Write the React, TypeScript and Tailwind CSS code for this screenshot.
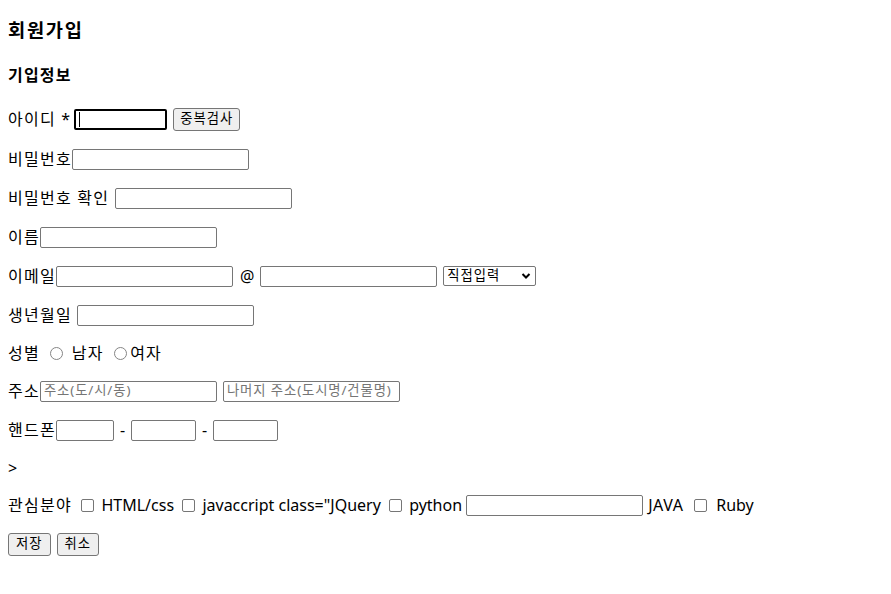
import React from "react";

const Input = ({ w, placeholder, focused }: { w: number; placeholder?: string; focused?: boolean }) => (
  <div
    className={
      "h-[21px] rounded-[2px] bg-white flex items-center px-[2px] box-border shrink-0 " +
      (focused ? "border-2 border-black" : "border border-[#767676]")
    }
    style={{ width: w }}
  >
    {focused && <div className="w-[1px] h-[15px] bg-black ml-[1px]" />}
    {placeholder && (
      <span className="text-[13.33px] text-[#757575] whitespace-pre leading-none pl-[1px] tracking-[0.9px]">
        {placeholder}
      </span>
    )}
  </div>
);

const Btn = ({ children, wide }: { children: React.ReactNode; wide?: boolean }) => (
  <div
    className={
      "h-[23px] bg-[#efefef] border border-[#767676] rounded-[3px] text-[13.33px] tracking-[1px] flex items-center leading-none text-black shrink-0 " +
      (wide ? "px-[7px]" : "px-[6px]")
    }
  >
    {children}
  </div>
);

const Radio = () => (
  <div className="w-[13px] h-[13px] rounded-full border border-[#858585] bg-white ml-[5px] mr-[3px] shrink-0" />
);

const Check = ({ className = "ml-[4px] mr-[3px]" }: { className?: string }) => (
  <div className={"w-[13px] h-[13px] rounded-[2px] border border-[#767676] bg-white shrink-0 " + className} />
);

const T = ({ children, className = "" }: { children: React.ReactNode; className?: string }) => (
  <span className={"whitespace-pre " + className}>{children}</span>
);

const K = ({ children }: { children: React.ReactNode }) => (
  <span className="whitespace-pre tracking-[1.25px]">{children}</span>
);

const Row = ({ children, className = "" }: { children: React.ReactNode; className?: string }) => (
  <div className={"flex items-center h-[22px] leading-[22px] " + className}>{children}</div>
);

export default function App() {
  return (
    <div
      className="bg-white text-black w-[891px] h-[594px] px-[8px] pt-[19px] text-[16px]"
      style={{ fontFamily: '"Noto Sans", "Noto Sans CJK KR", sans-serif' }}
    >
      <div className="h-[22px] leading-[22px] text-[18.72px] font-bold tracking-[1.7px]">회원가입</div>
      <div className="mt-[23px] h-[22px] leading-[22px] text-[16px] font-bold tracking-[1.2px]">기입정보</div>

      <Row className="mt-[22px]">
        <K>아이디 </K>
        <T>* </T>
        <Input w={93} focused />
        <div className="w-[6px]" />
        <Btn>중복검사</Btn>
      </Row>

      <Row className="mt-[18px]">
        <K>비밀번호</K>
        <Input w={177} />
      </Row>

      <Row className="mt-[17px]">
        <K>비밀번호 확인 </K>
        <Input w={177} />
      </Row>

      <Row className="mt-[17px]">
        <K>이름</K>
        <Input w={177} />
      </Row>

      <Row className="mt-[17px]">
        <K>이메일</K>
        <Input w={177} />
        <T className="ml-[7px] mr-[6px]">@</T>
        <Input w={177} />
        <div className="w-[6px]" />
        <div className="h-[20px] w-[93px] border border-[#767676] rounded-[2px] bg-white flex items-center justify-between pl-[3px] pr-[4px] shrink-0">
          <span className="text-[13.33px] leading-none tracking-[1px]">직접입력</span>
          <svg width="10" height="10" viewBox="0 0 10 10">
            <path d="M1.5 3 L5 6.5 L8.5 3" fill="none" stroke="black" strokeWidth="2" />
          </svg>
        </div>
      </Row>

      <Row className="mt-[17px]">
        <K>생년월일 </K>
        <Input w={177} />
      </Row>

      <Row className="mt-[16px]">
        <K>성별 </K>
        <Radio />
        <K> 남자 </K>
        <Radio />
        <K>여자</K>
      </Row>

      <Row className="mt-[16px]">
        <K>주소</K>
        <Input w={177} placeholder="주소(도/시/동)" />
        <div className="w-[6px]" />
        <Input w={177} placeholder="나머지 주소(도시명/건물명)" />
      </Row>

      <Row className="mt-[17px]">
        <K>핸드폰</K>
        <Input w={58} />
        <T className="px-[6px]">-</T>
        <Input w={65} />
        <T className="px-[6px]">-</T>
        <Input w={65} />
      </Row>

      <Row className="mt-[16px]">
        <T>&gt;</T>
      </Row>

      <Row className="mt-[15px]">
        <K>관심분야 </K>
        <Check />
        <T> HTML/css </T>
        <Check />
        <T> javaccript class="JQuery </T>
        <Check />
        <T> python </T>
        <Input w={177} />
        <T className="ml-[5px] tracking-[0.5px]">JAVA </T>
        <Check className="ml-[6px] mr-[3px]" />
        <T className="ml-[2px]"> Ruby</T>
      </Row>

      <Row className="mt-[17px]">
        <Btn wide>저장</Btn>
        <div className="w-[6px]" />
        <Btn wide>취소</Btn>
      </Row>
    </div>
  );
}
